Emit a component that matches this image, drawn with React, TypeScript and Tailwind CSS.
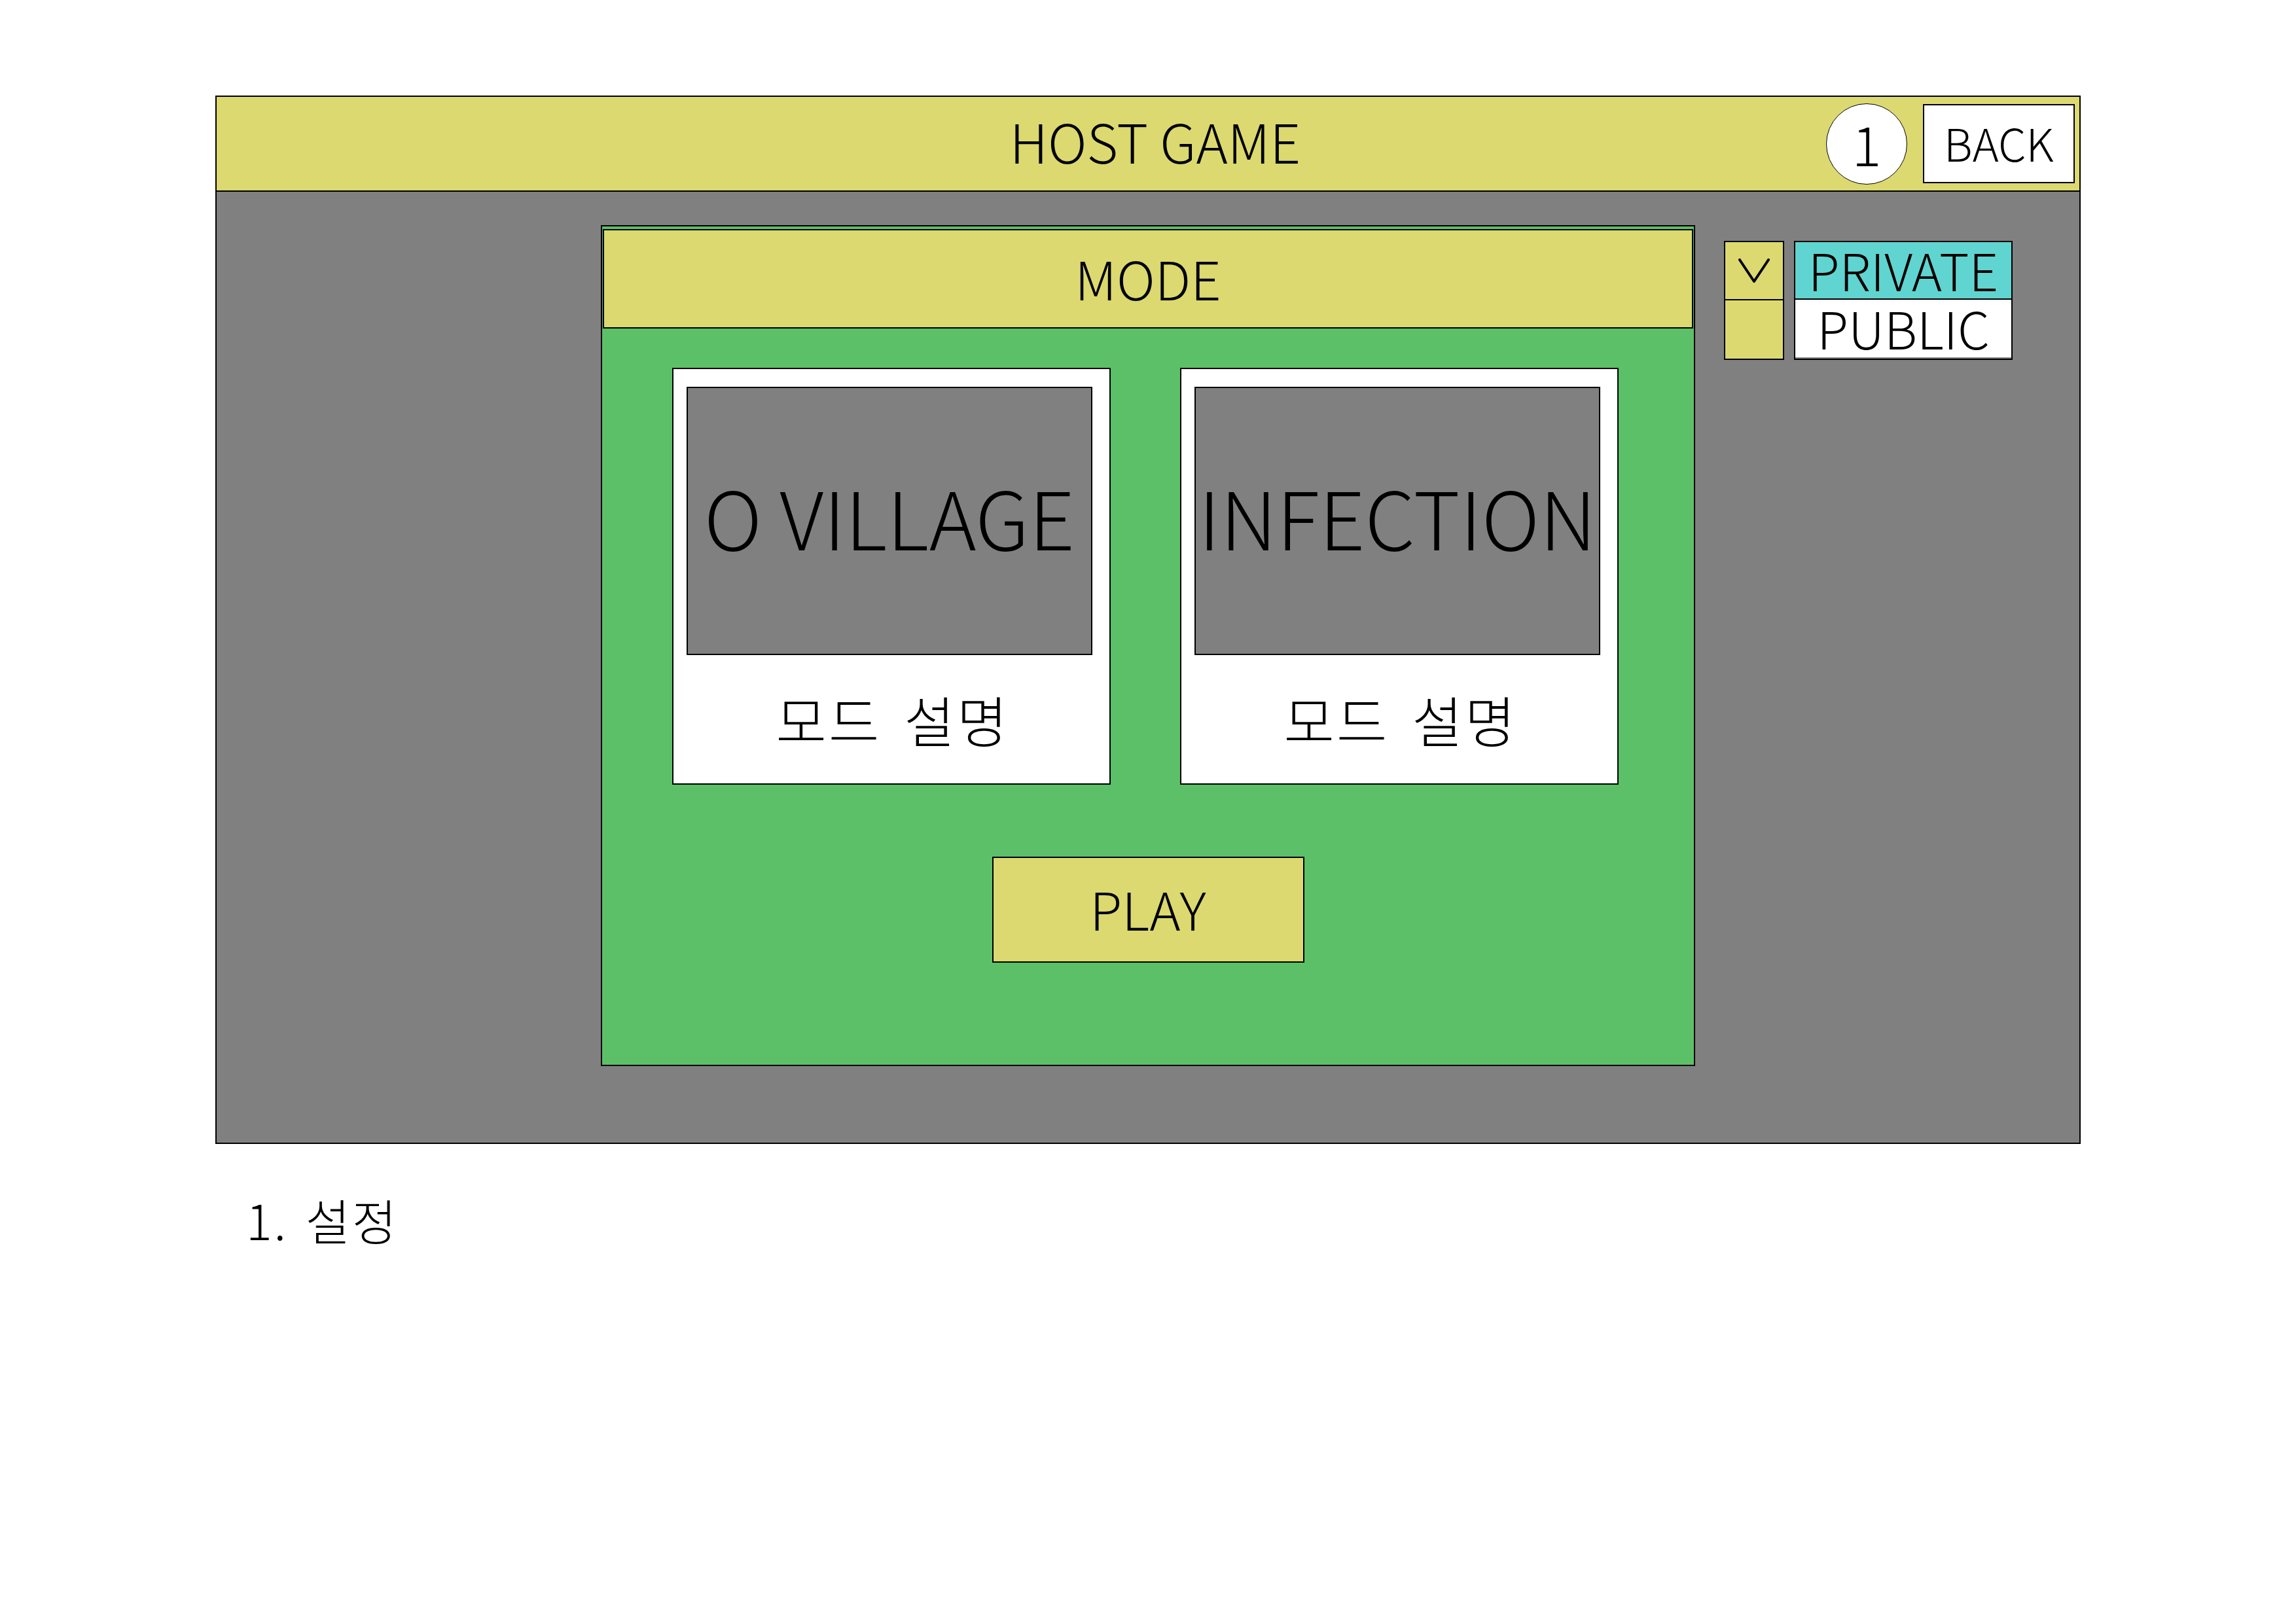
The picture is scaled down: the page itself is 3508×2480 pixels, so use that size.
// Host game screen mockup: mode picker, privacy toggle, back button

const YELLOW = 'bg-[#dbd970]';

const ModeCard = ({ name }: { name: string }) => (
  <div className="w-[670px] h-[637px] border-2 border-black bg-white flex flex-col pl-[20px] pr-[26px] pt-[27px]">
    <div className="h-[410px] border-2 border-black bg-[#808080] flex items-center justify-center pb-[16px]">
      <span className="text-[122px] leading-none text-black">{name}</span>
    </div>
    <div className="flex-1 flex items-center justify-center pl-[10px]">
      <span className="text-[84px] leading-none text-black tracking-[0.04em] [word-spacing:0.15em]">모드 설명</span>
    </div>
  </div>
);

export default function App() {
  return (
    <div className="w-[3508px] min-h-[2480px] bg-white pl-[329px] pt-[146px] font-['Noto_Sans_CJK_KR','Noto_Sans',sans-serif] font-light text-black">
      <div className="w-[2850px] h-[1602px] border-2 border-black bg-[#808080] flex flex-col">
        {/* Header */}
        <div className={`h-[145px] shrink-0 border-b-2 border-black ${YELLOW} grid grid-cols-[1fr_auto_1fr] items-center`}>
          <div />
          <div className="text-[82px] leading-none pl-[22px] pb-[10px]">HOST GAME</div>
          <div className="flex justify-end items-center gap-[24px] pr-[7px]">
            <div className="w-[124px] h-[124px] rounded-full border border-black bg-white flex items-center justify-center text-[84px] leading-none pb-[4px]">
              1
            </div>
            <div className="w-[232px] h-[121px] border-2 border-black bg-white flex items-center justify-center text-[68px] leading-none pb-[4px]">
              BACK
            </div>
          </div>
        </div>

        {/* Body */}
        <div className="flex items-start pl-[587px] pt-[51px]">
          <div className="w-[1672px] h-[1285px] border-2 border-black bg-[#5cc068] flex flex-col px-[1px] pt-[4px]">
            <div className={`h-[152px] border-2 border-black ${YELLOW} flex items-center justify-center text-[81px] leading-none pb-[6px]`}>
              MODE
            </div>
            <div className="mt-[60px] flex justify-center gap-[106px] pr-[8px]">
              <ModeCard name="O VILLAGE" />
              <ModeCard name="INFECTION" />
            </div>
            <div className={`mt-[110px] self-center w-[477px] h-[162px] border-2 border-black ${YELLOW} flex items-center justify-center text-[80px] leading-none pb-[6px]`}>
              PLAY
            </div>
          </div>

          <div className="ml-[44px] mt-[24px] flex gap-[15px]">
            <div className="flex flex-col">
              <div className={`w-[92px] h-[91px] border-2 border-black ${YELLOW} flex items-center justify-center`}>
                <svg width="48" height="38" viewBox="0 0 48 38" fill="none">
                  <polyline points="2,2 24,35 46,2" stroke="black" strokeWidth="4" strokeLinecap="round" strokeLinejoin="round" />
                </svg>
              </div>
              <div className={`w-[92px] h-[91px] border-2 border-t-0 border-black ${YELLOW}`} />
            </div>
            <div className="w-[334px] border-2 border-black flex flex-col">
              <div className="h-[88px] bg-[#60d4d0] border-b-2 border-black flex items-center justify-center text-[78px] leading-none pb-[4px]">
                PRIVATE
              </div>
              <div className="h-[88px] bg-white flex items-center justify-center text-[78px] leading-none pb-[4px]">
                PUBLIC
              </div>
            </div>
          </div>
        </div>
      </div>

      <div className="mt-[78px] pl-[47px] text-[74px] leading-none tracking-[0.04em] [word-spacing:0.1em]">1. 설정</div>
    </div>
  );
}
